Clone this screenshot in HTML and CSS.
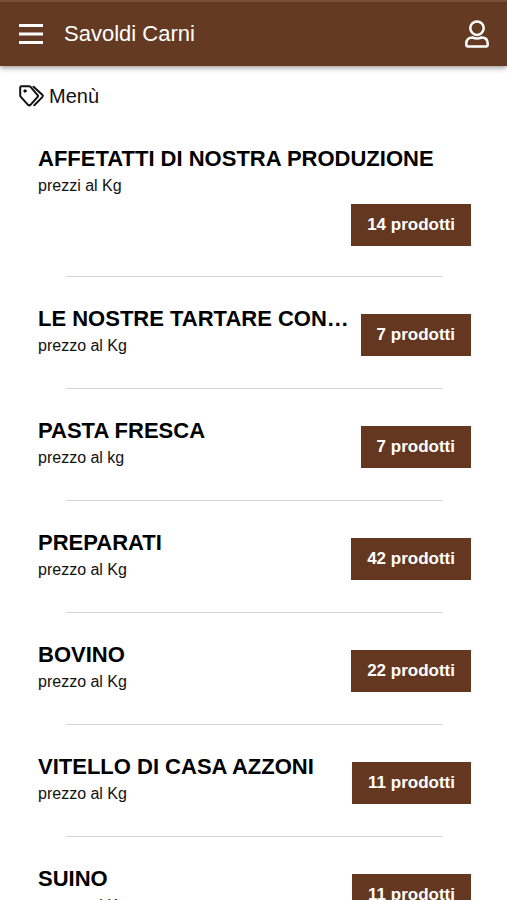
FILE: index.html
```html
<!DOCTYPE html>
<html lang="it">
<head>
<meta charset="utf-8">
<meta name="viewport" content="width=device-width, initial-scale=1">
<title>Savoldi Carni</title>
<link rel="stylesheet" href="styles.css">
</head>
<body>
<header class="topbar">
  <button class="icon-button" aria-label="Apri menu">
    <svg width="24" height="20" viewBox="0 0 24 20"><path d="M0 1.500h24M0 10h24M0 18.500h24" stroke="currentColor" stroke-width="2.800"/></svg>
  </button>
  <a class="brand" href="#">Savoldi Carni</a>
  <button class="icon-button account" aria-label="Account">
    <svg width="24" height="28" viewBox="0 0 24 28" fill="none" stroke="currentColor" stroke-width="2.500" stroke-linejoin="round"><circle cx="12" cy="8.200" r="6.700"/><path d="M7.500 17.500C3.500 17.500 1.300 20 1.300 23.500v1.300c0 1 .6 1.700 1.700 1.700h18c1.100 0 1.700-.7 1.700-1.700v-1.300C22.700 20 20.500 17.500 16.500 17.500c-1.500.7-3 1-4.500 1s-3-.3-4.500-1z"/></svg>
  </button>
</header>
<main>
  <h1 class="page-title">
    <svg width="26" height="22" viewBox="0 0 26 22" fill="none" stroke="currentColor" stroke-width="2" stroke-linejoin="round" stroke-linecap="round"><path d="M1.200 2.500v8c0 .6.200 1 .6 1.400l7.200 7.900c.8.800 1.700.8 2.500 0l6.900-7.600c.8-.8.8-1.600 0-2.400L11.300 1.700c-.4-.4-.8-.5-1.300-.5H2.500c-.8 0-1.300.5-1.300 1.300z"/><path d="M14.500 1.700l8.800 8.100c.8.800.8 1.500 0 2.300l-8 8.200"/><circle cx="6" cy="6" r="1.200" fill="currentColor" stroke-width="1"/></svg>
    <span>Menù</span>
  </h1>
  <ul class="categories">
    <li class="category wrapped"><div class="info"><h2>AFFETATTI DI NOSTRA PRODUZIONE</h2><p>prezzi al Kg</p></div><a class="count" href="#">14 prodotti</a></li>
    <li class="category"><div class="info"><h2>LE NOSTRE TARTARE CON…</h2><p>prezzo al Kg</p></div><a class="count" href="#">7 prodotti</a></li>
    <li class="category"><div class="info"><h2>PASTA FRESCA</h2><p>prezzo al kg</p></div><a class="count" href="#">7 prodotti</a></li>
    <li class="category"><div class="info"><h2>PREPARATI</h2><p>prezzo al Kg</p></div><a class="count" href="#">42 prodotti</a></li>
    <li class="category"><div class="info"><h2>BOVINO</h2><p>prezzo al Kg</p></div><a class="count" href="#">22 prodotti</a></li>
    <li class="category"><div class="info"><h2>VITELLO DI CASA AZZONI</h2><p>prezzo al Kg</p></div><a class="count" href="#">11 prodotti</a></li>
    <li class="category"><div class="info"><h2>SUINO</h2><p>prezzo al Kg</p></div><a class="count" href="#">11 prodotti</a></li>
  </ul>
</main>
</body>
</html>
```

FILE: styles.css
```css
* { box-sizing: border-box; }
html { height: 100%; overflow: hidden; }
body {
  margin: 0;
  height: 100%;
  overflow: hidden;
  background: #fff;
  color: #111;
  font-family: "Liberation Sans", Arial, sans-serif;
}
h1, h2, p, ul { margin: 0; padding: 0; }
.topbar {
  display: flex;
  align-items: center;
  height: 66px;
  padding: 0 18px 0 19px;
  border-top: 2px solid #78503a;
  background: #643b22;
  color: #fff;
  box-shadow: 0 1px 6px rgba(0, 0, 0, 0.5);
}
.icon-button {
  display: flex;
  padding: 0;
  border: 0;
  background: none;
  color: inherit;
}
.account { margin-left: auto; }
.brand {
  margin-left: 21px;
  color: inherit;
  font-size: 22px;
  text-decoration: none;
}
.page-title {
  display: flex;
  align-items: center;
  gap: 4px;
  padding: 18px 19px 0;
  font-size: 20px;
  line-height: 24px;
  font-weight: 400;
}
.categories {
  padding: 21px 36px 0 38px;
  list-style: none;
}
.category {
  position: relative;
  display: flex;
  align-items: flex-end;
  justify-content: space-between;
  gap: 10px;
  padding: 28px 0 31px;
}
.category::after {
  content: "";
  position: absolute;
  right: 29px;
  bottom: 0;
  left: 28px;
  border-bottom: 1px solid #d8d4d2;
}
.wrapped {
  flex-wrap: wrap;
  justify-content: flex-end;
  padding: 16px 0 29px;
  row-gap: 6px;
}
.wrapped .info { flex-basis: 100%; }
.info { min-width: 0; }
.info h2 {
  margin-bottom: 2px;
  overflow: hidden;
  color: #000;
  font-size: 22px;
  line-height: 27px;
  text-overflow: ellipsis;
  white-space: nowrap;
}
.info p {
  font-size: 16px;
  line-height: 24px;
}
.count {
  flex: none;
  margin-bottom: 2px;
  padding: 0 16px;
  background: #643820;
  color: #fff;
  font-size: 17px;
  font-weight: 700;
  line-height: 42px;
  text-decoration: none;
}
```
